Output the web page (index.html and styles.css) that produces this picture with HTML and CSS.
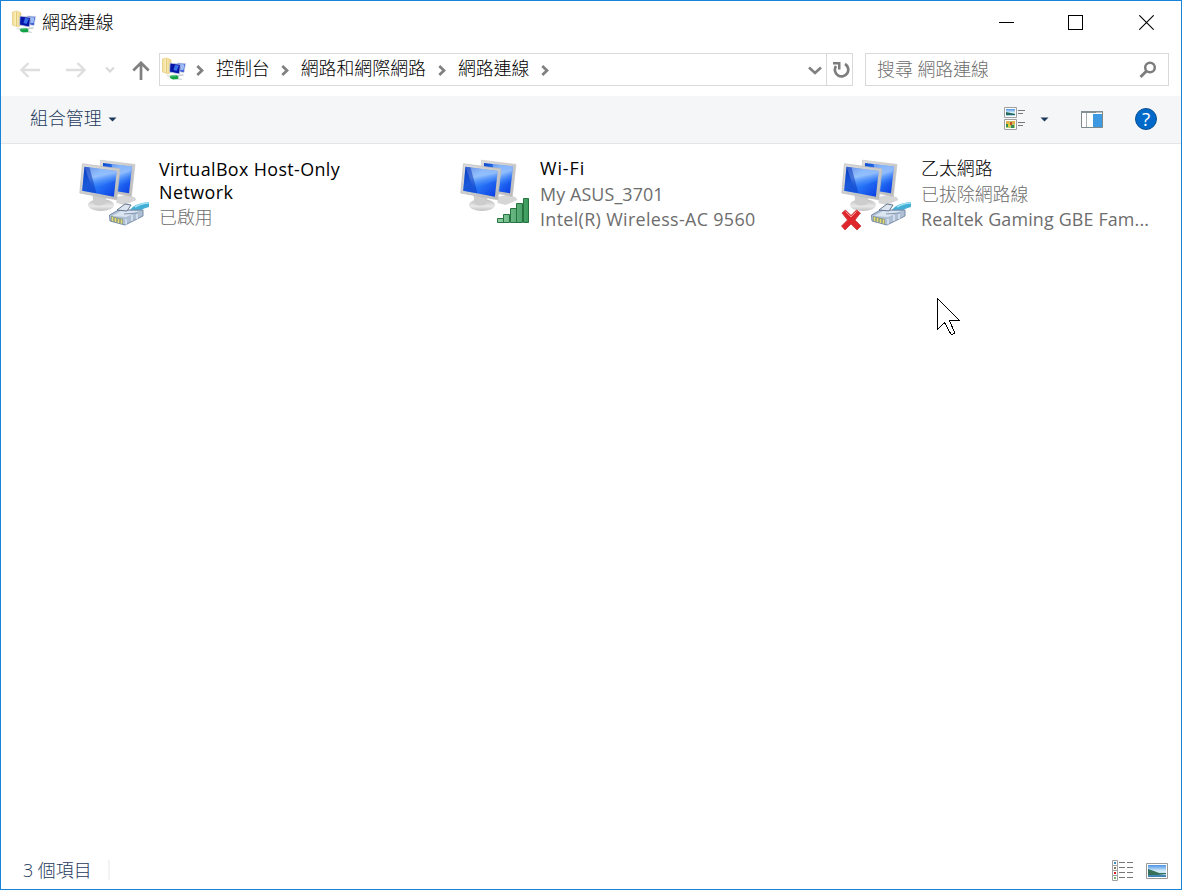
FILE: index.html
```html
<!DOCTYPE html>
<html lang="zh-Hant">
<head>
<meta charset="utf-8">
<title>網路連線</title>
<link rel="stylesheet" href="styles.css">
</head>
<body>
<svg class="defs" width="0" height="0" aria-hidden="true">
  <defs>
    <linearGradient id="blue" x1="0" y1="0" x2="1" y2="1">
      <stop offset="0" stop-color="#0a45cc"/><stop offset=".35" stop-color="#2f80fa"/><stop offset=".6" stop-color="#2470f6"/><stop offset="1" stop-color="#0839e0"/>
    </linearGradient>
    <linearGradient id="sheen" x1="0" y1="0" x2=".3" y2="1">
      <stop offset="0" stop-color="#fff" stop-opacity=".35"/><stop offset=".5" stop-color="#d6ecff" stop-opacity=".6"/><stop offset="1" stop-color="#4c94ff" stop-opacity="0"/>
    </linearGradient>
    <linearGradient id="frame" x1="0" y1="0" x2="1" y2="1">
      <stop offset="0" stop-color="#dedede"/><stop offset="1" stop-color="#b8b8b8"/>
    </linearGradient>
    <linearGradient id="stand" x1="0" y1="0" x2="0" y2="1">
      <stop offset="0" stop-color="#bbb"/><stop offset=".6" stop-color="#e8e8e8"/><stop offset="1" stop-color="#bfbfbf"/>
    </linearGradient>
    <linearGradient id="green" x1="0" y1="0" x2="1" y2="0">
      <stop offset="0" stop-color="#8fcea3"/><stop offset="1" stop-color="#3b9a5c"/>
    </linearGradient>
    <linearGradient id="folder" x1="0" y1="0" x2="1" y2="0">
      <stop offset="0" stop-color="#efd98a"/><stop offset=".4" stop-color="#fbf0c0"/><stop offset="1" stop-color="#e9cf7c"/>
    </linearGradient>
    <linearGradient id="photo" x1="0" y1="0" x2="0" y2="1">
      <stop offset="0" stop-color="#4b93e6"/><stop offset=".5" stop-color="#d5ecf8"/><stop offset="1" stop-color="#a9cfe6"/>
    </linearGradient>
    <symbol id="monitors" viewBox="8.500 7 74 76">
      <path d="M47 46l9-2 9 2 2 3-12 5-8-2z" fill="#d6d6d6"/>
      <path d="M31 9.200l34.500 4.200-3.600 32.200L30 39z" fill="url(#frame)" stroke="#c3c3c3" stroke-width=".6"/>
      <path d="M33.500 12l29 3.400-3 26.800L33 38z" fill="url(#blue)"/>
      <path d="M42 13l20.500 2.400-2 17L47 36z" fill="url(#sheen)"/>
      <ellipse cx="31.500" cy="54" rx="13" ry="6" fill="url(#stand)"/>
      <path d="M23 44l14 2-1 7q-7 3-12 0z" fill="#cdcdcd"/>
      <path d="M13 12.800l37.500 5-3.300 31L10.300 42z" fill="url(#frame)" stroke="#bbb" stroke-width=".7"/>
      <path d="M15 15.800l32.200 4.300-2.800 25.700-31.700-6z" fill="url(#blue)"/>
      <path d="M15 15.800l32.200 4.300-1 9.500L23 38z" fill="url(#sheen)"/>
      <path d="M15 15.800l5 .7 7 25.800-14.300-2.500z" fill="#0936bd" opacity=".55"/>
    </symbol>
    <symbol id="plug" viewBox="8 8 74 76">
      <path d="M60 60c4-5 9-7 19-8v5c-5 1-8 3-12 6z" fill="#42aed6"/>
      <path d="M65 57c5-3 8-4 14-4" fill="none" stroke="#a4e1f3" stroke-width="1.500"/>
      <path d="M39.500 65l9-5 24.500 0v6l-18 9-15-4z" fill="#aebfd3" stroke="#768ba9" stroke-width="1"/>
      <path d="M42 66l9-5 18 0-13 6z" fill="#dbe5f1"/>
      <path d="M47 60l8-6 6 1-4 6z" fill="#dce5f0" stroke="#65778f" stroke-width="1"/>
      <path d="M56 69v5.500M62 65v6M67 63v6" stroke="#dae6f3" stroke-width="1.500"/>
      <path d="M41 66l12 3v5l-12-3z" fill="#8b9a87"/>
      <path d="M42.500 67v4M45.500 68v4M48.500 69v4M51.500 69.500v4" stroke="#e7dc70" stroke-width="1.500"/>
      <path d="M54 64l14-1" stroke="#8295ae"/>
    </symbol>
    <symbol id="network" viewBox="0 0 24 24">
      <path d="M.5 2L5 1l4 2v12l-3 2-5.500-2z" fill="url(#folder)" stroke="#e0c577" stroke-width=".6"/>
      <path d="M4.500 2v14" stroke="#d9bb62" stroke-width=".7"/>
      <path d="M15 6l8.500.5-1.500 9-6-1z" fill="#2344d0" stroke="#cfd6e6" stroke-width=".8"/>
      <path d="M18.500 7l4 .3-1 6-3 0z" fill="#9bbcf6"/>
      <path d="M8 6l10.500 1.500-1 9.500L7.500 15z" fill="#0614a8" stroke="#c8cfdf" stroke-width=".8"/>
      <path d="M13 8l4 .5-2.500 5.500-3-1z" fill="#3970e8"/>
      <path d="M10 17.500l6 .5 5-1 1 1.500-6 1z" fill="#c9cfd4"/>
      <path d="M4 18l7 1 9 3v1l-6-.5L5 19z" fill="#d5dbda"/>
      <path d="M8.500 18.500l6-.2 2 1.400-.5 2.300-5 .4-3-1.400z" fill="#10a244"/>
      <path d="M9 19l5-.2" stroke="#6fd08c" stroke-width=".8"/>
    </symbol>
    <symbol id="crumb" viewBox="0 0 8 11"><path d="M1.300 1l4.700 4.500L1.300 10" fill="none" stroke="#808080" stroke-width="2.700"/></symbol>
  </defs>
</svg>

<div class="window">
  <header class="titlebar">
    <svg class="net-icon"><use href="#network"/></svg>
    <h1 class="title">網路連線</h1>
    <div class="captions">
      <svg width="15" height="16" shape-rendering="crispEdges"><path d="M0 7.500h15" stroke="#000"/></svg>
      <svg width="15" height="16" shape-rendering="crispEdges"><path d="M.5.500h14v14H.5z" fill="none" stroke="#000"/></svg>
      <svg class="close" width="15" height="15"><path d="M.3.300l14.400 14.400M14.700.300L.3 14.700" stroke="#000" stroke-width="1.100"/></svg>
    </div>
  </header>

  <nav class="address-row">
    <div class="history">
      <svg class="back" width="20" height="16"><path d="M1.500 8H20M8.500 1L1.500 8l7 7" fill="none" stroke="#dedede" stroke-width="2.300"/></svg>
      <svg class="forward" width="20" height="16"><path d="M0 8h18.500M11.500 1l7 7-7 7" fill="none" stroke="#dedede" stroke-width="2.300"/></svg>
      <svg class="recent" width="10" height="8"><path d="M1 1.500l4 4 4-4" fill="none" stroke="#d8d8d8" stroke-width="2"/></svg>
      <svg class="up" width="18" height="20"><path d="M9 19V2M1.300 9.500L9 1.800l7.700 7.700" fill="none" stroke="#808080" stroke-width="2.700"/></svg>
    </div>
    <div class="address">
      <svg class="net-icon"><use href="#network"/></svg>
      <div class="crumbs">
        <svg class="crumb"><use href="#crumb"/></svg><span>控制台</span>
        <svg class="crumb"><use href="#crumb"/></svg><span>網路和網際網路</span>
        <svg class="crumb"><use href="#crumb"/></svg><span>網路連線</span>
        <svg class="crumb"><use href="#crumb"/></svg>
      </div>
      <svg class="drop" width="14" height="9"><path d="M1 1.500l6 5.500 6-5.500" fill="none" stroke="#808080" stroke-width="2.600"/></svg>
      <div class="refresh">
        <svg width="18" height="18"><path d="M13 3A6.700 6.700 0 1 1 4 5" fill="none" stroke="#7d7d7d" stroke-width="2.700"/><path d="M1 1h7.500v7.500H6V3.500H1z" fill="#7d7d7d"/></svg>
      </div>
    </div>
    <div class="search">
      <span>搜尋 網路連線</span>
      <svg width="18" height="18"><circle cx="11" cy="6.500" r="4.800" fill="none" stroke="#7d7d7d" stroke-width="2.500"/><path d="M7.500 10l-6 6" stroke="#7d7d7d" stroke-width="2.800"/></svg>
    </div>
  </nav>

  <div class="toolbar">
    <span class="organize">組合管理</span>
    <svg class="caret" width="9" height="5"><path d="M.5.500h8l-4 4z" fill="#1e395b"/></svg>
    <div class="tools">
      <svg class="views" width="22" height="24">
        <path d="M.5.500h12v10H.5zM.5 12.500h12v10H.5z" fill="#fff" stroke="#a0a0a0"/>
        <path d="M2 2h9v7H2z" fill="url(#photo)"/><path d="M2 5l9 2v1H2z" fill="#24685b"/>
        <path d="M2 14h9v7H2z" fill="#b5cf78"/><path d="M2 14h3v3H2zM8 14h3v3H8z" fill="#e2b04a"/><circle cx="5" cy="18" r="1.800" fill="#e8cb34"/><path d="M6 15h2v3H6z" fill="#c8502d"/><path d="M2 17h2v3H2zM7 18h3v3H7z" fill="#378b52"/>
        <path d="M14 3.500h7M14 6.500h5M14 15.500h7M14 18.500h5" stroke="#777"/>
      </svg>
      <svg class="caret" width="9" height="5"><path d="M.5.500h8l-4 4z" fill="#1e395b"/></svg>
      <svg class="pane" width="22" height="17"><path d="M.5.500h21v16H.5z" fill="#fff" stroke="#7d898c"/><path d="M0 0h22v2H0z" fill="#849093"/><path d="M5.500 2v14" stroke="#a6afb1"/><path d="M12 3h9v13h-9z" fill="#3e99e3"/><path d="M15.500 1.500h1M17.500 1.500h1M19.500 1.500h1" stroke="#eee"/></svg>
      <div class="help">?</div>
    </div>
  </div>

  <main class="items">
    <article class="item">
      <div class="art"><svg class="device"><use href="#monitors"/><use href="#plug"/></svg></div>
      <div class="info virtual">
        <div class="name"><span class="latin n1">VirtualBox Host-Only</span><br><span class="latin n2">Network</span></div>
        <div class="detail">已啟用</div>
      </div>
    </article>
    <article class="item">
      <div class="art"><svg class="device"><use href="#monitors"/></svg>
        <svg class="signal" width="33" height="26"><g fill="url(#green)" stroke="#26733f"><path d="M.5 20.500h6v4h-6zM6.500 16.500h6v8h-6zM13.500 10.500h6v14h-6zM19.500 5.500h6v19h-6zM26.500.500h5v24h-5z"/></g></svg>
      </div>
      <div class="info">
        <div class="name latin wifi">Wi-Fi</div>
        <div class="detail latin asus">My ASUS_3701</div>
        <div class="detail latin intel">Intel(R) Wireless-AC 9560</div>
      </div>
    </article>
    <article class="item">
      <div class="art"><svg class="device"><use href="#monitors"/><use href="#plug"/></svg>
        <svg class="cross" width="22" height="22"><path d="M4.500 1L10 6.500 15.500 1l4 3-5.500 7 6 6-4 4-6-6-6 6-3.500-4L6.500 11 1 4z" fill="#e0262d" stroke="#c9393f" stroke-width=".8"/><path d="M4.500 2.500L10 8l5.500-5.500" fill="none" stroke="#f49b9b"/></svg>
      </div>
      <div class="info">
        <div class="name">乙太網路</div>
        <div class="detail">已拔除網路線</div>
        <div class="detail latin realtek">Realtek Gaming GBE Fam...</div>
      </div>
    </article>
    <svg class="pointer" width="24" height="40" shape-rendering="crispEdges"><path d="M.5.500v31l7-7 6 11q1 1.500 4 0v-1l-5-12h10z" fill="#fff" stroke="#000"/></svg>
  </main>

  <footer class="statusbar">
    <span class="count">3 個項目</span>
    <div class="modes">
      <svg width="22" height="22"><g fill="#fff" stroke="#a0a0a0"><path d="M.5.500h5v5h-5zM.5 5.500h5v5h-5zM.5 10.500h5v5h-5zM.5 15.500h5v5h-5z"/></g><path d="M2 2h2v2H2z" fill="#3b8bbd"/><path d="M2 7h2v2H2z" fill="#89735d"/><path d="M2 12h2v2H2z" fill="#d92222"/><path d="M2 17h2v2H2z" fill="#7bb269"/><path d="M7 2.500h6M15 2.500h6M7 7.500h6M15 7.500h6M7 12.500h6M15 12.500h6M7 17.500h6M15 17.500h6" stroke="#777"/></svg>
      <svg width="22" height="16"><path d="M.5.500h21v15H.5z" fill="#fff" stroke="#999"/><path d="M2 2h18v12H2z" fill="url(#photo)"/><path d="M2 6l6 2 5 2 7 0v1l-8 1H2z" fill="#36715b"/><path d="M2 12h18v2H2z" fill="#4086b9"/></svg>
    </div>
  </footer>
</div>
</body>
</html>
```
FILE: styles.css
```css
* { box-sizing: border-box; }
body {
  margin: 0;
  font: 300 17.900px/24px "Open Sans", "Noto Sans CJK TC", sans-serif;
  color: #000;
}
svg { display: block; flex: none; }
.defs { position: absolute; }
.window {
  width: 1182px;
  height: 890px;
  border: 1px solid #1883d7;
  background: #fff;
  display: flex;
  flex-direction: column;
}
.titlebar {
  height: 44px;
  display: flex;
  align-items: flex-start;
  padding: 9px 27px 0 11px;
}
.net-icon { width: 24px; height: 24px; }
.title { margin: 0 0 0 6px; font: inherit; white-space: nowrap; }
.captions { margin: 5px 0 0 auto; display: flex; }
.captions svg + svg { margin-left: 54px; }
.captions svg + .close { margin-left: 56px; }

.address-row {
  height: 51px;
  padding: 8px 12px 0 0;
  display: flex;
  align-items: flex-start;
}
.history {
  width: 158px;
  height: 33px;
  padding-left: 19px;
  display: flex;
  align-items: center;
}
.forward { margin-left: 26px; }
.recent { margin-left: 19px; }
.up { margin-left: 17px; margin-top: 2px; }
.address {
  width: 694px;
  height: 33px;
  border: 1px solid #d9d9d9;
  display: flex;
  align-items: center;
}
.address .net-icon { margin: -2px 0 0 2px; }
.crumbs { display: flex; align-items: center; margin: 2px 0 0 10px; }
.crumbs span { margin: -6px 11px 0 12px; white-space: nowrap; }
.crumbs span:nth-of-type(2) { margin-right: 12px; }
.crumb { width: 8px; height: 11px; }
.drop { margin: 2px 4px 0 auto; }
.refresh {
  width: 26px;
  height: 31px;
  border-left: 1px solid #d9d9d9;
  padding-left: 2px;
  display: flex;
  align-items: center;
  justify-content: center;
}
.search {
  width: 304px;
  height: 33px;
  margin-left: auto;
  border: 1px solid #d9d9d9;
  padding: 0 11px 0 11px;
  display: flex;
  align-items: center;
  justify-content: space-between;
  color: #6d6d6d;
}
.search span { margin-top: -2px; }

.toolbar {
  height: 48px;
  background: #f5f6f7;
  border-bottom: 1px solid #e5e5e5;
  display: flex;
  align-items: center;
  padding: 0 24px 0 29px;
  color: #1e395b;
}
.organize { margin: -3px 6px 0 0; }
.tools { margin-left: auto; display: flex; align-items: center; }
.views { margin-top: -1px; }
.tools .caret { margin-left: 14px; }
.pane { margin-left: 32px; }
.help {
  width: 22px;
  height: 22px;
  margin: -2px 0 0 32px;
  border: 1px solid #084f91;
  border-radius: 50%;
  background: #0069ca;
  color: #fff;
  font-weight: 400;
  font-size: 19px;
  line-height: 20px;
  text-align: center;
}

.items {
  flex: 1;
  position: relative;
  display: grid;
  grid-template-columns: repeat(3, 381px);
  align-items: start;
  padding: 14px 0 0 77px;
}
.item { display: flex; }
.art { position: relative; width: 81px; height: 76px; }
.device { width: 74px; height: 76px; }
.signal { position: absolute; left: 38px; top: 40px; }
.cross { position: absolute; left: 1px; top: 51px; }
.info { white-space: nowrap; line-height: 25.500px; margin-top: -2px; }
.virtual .name { line-height: 23px; margin-top: 2px; }
.virtual .detail { line-height: 27px; }
.latin { font-weight: 400; }
.detail { color: #6d6d6d; }
.n1 { letter-spacing: .37px; }
.n2 { letter-spacing: .45px; }
.wifi { letter-spacing: .9px; }
.asus { letter-spacing: .1px; }
.intel { letter-spacing: .34px; }
.realtek { letter-spacing: .15px; }
.pointer { position: absolute; left: 936px; top: 154px; }

.statusbar {
  height: 39px;
  display: flex;
  align-items: flex-start;
  justify-content: space-between;
  padding: 10px 13px 0 22px;
  color: #1e395b;
}
.count { padding-right: 16px; border-right: 2px solid #f3f3f3; line-height: 20px; }
.modes { display: flex; align-items: center; gap: 12px; }
```
